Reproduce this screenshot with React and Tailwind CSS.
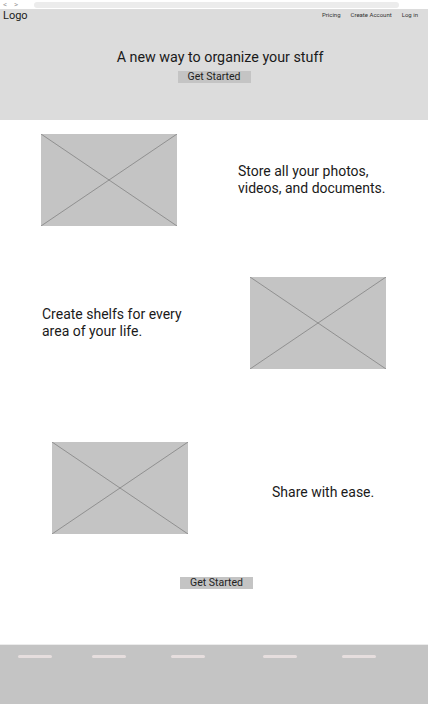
import React from "react";

const Placeholder = ({ className = "" }) => (
  <div className={`relative shrink-0 bg-[#c4c4c4] ${className}`}>
    <svg
      className="absolute inset-0 h-full w-full"
      viewBox="0 0 100 100"
      preserveAspectRatio="none"
    >
      <line x1="0" y1="0" x2="100" y2="100" stroke="#7a7a7a" strokeWidth="0.7" vectorEffect="non-scaling-stroke" />
      <line x1="100" y1="0" x2="0" y2="100" stroke="#7a7a7a" strokeWidth="0.7" vectorEffect="non-scaling-stroke" />
    </svg>
  </div>
);

const GetStarted = () => (
  <button
    type="button"
    className="flex h-[12px] w-[73px] items-center justify-center bg-[#c4c4c4] text-[10.5px] leading-none text-[#222]"
  >
    Get Started
  </button>
);

const navLinks = ["Pricing", "Create Account", "Log in"];
const footerDashes = ["ml-[18px]", "ml-[40px]", "ml-[45px]", "ml-[58px]", "ml-[45px]"];

export default function App() {
  return (
    <div className="flex h-[704px] w-[428px] flex-col overflow-hidden bg-white font-['Roboto',sans-serif] text-[#1a1a1a]">
      {/* browser chrome */}
      <div className="flex h-[9px] items-center bg-white">
        <span className="ml-[3px] text-[8px] leading-none text-[#999]">&lt;</span>
        <span className="ml-[7px] text-[8px] leading-none text-[#999]">&gt;</span>
        <div className="ml-[16px] h-[6px] w-[365px] rounded-full bg-[#ececec]" />
      </div>

      {/* header */}
      <header className="flex h-[111px] flex-col bg-[#dcdcdc]">
        <div className="flex items-start justify-between">
          <span className="ml-[3px] mt-[1px] text-[11px] leading-[12px]">Logo</span>
          <nav className="mr-[10px] mt-[3px] flex gap-[10px] text-[6px] leading-none text-[#333]">
            {navLinks.map((l) => (
              <span key={l}>{l}</span>
            ))}
          </nav>
        </div>
        <div className="mt-[27px] flex flex-col items-center">
          <h1 className="pl-[12px] text-[14.3px] leading-[17px]">A new way to organize your stuff</h1>
          <div className="mt-[5px]">
            <GetStarted />
          </div>
        </div>
      </header>

      {/* feature 1 */}
      <section className="mt-[14px] flex items-center">
        <Placeholder className="ml-[41px] h-[92px] w-[136px]" />
        <p className="ml-[61px] text-[14px] leading-[17px]">
          Store all your photos,
          <br />
          videos, and documents.
        </p>
      </section>

      {/* feature 2 */}
      <section className="mt-[51px] flex items-center">
        <p className="ml-[42px] w-[208px] text-[14px] leading-[17px]">
          Create shelfs for every
          <br />
          area of your life.
        </p>
        <Placeholder className="h-[92px] w-[136px]" />
      </section>

      {/* feature 3 */}
      <section className="mt-[73px] flex items-center">
        <Placeholder className="ml-[52px] h-[92px] w-[136px]" />
        <p className="ml-[84px] mt-[8px] text-[14px] leading-[17px]">Share with ease.</p>
      </section>

      <div className="mt-[43px] flex justify-center pl-[5px]">
        <GetStarted />
      </div>

      {/* footer */}
      <footer className="mt-auto h-[60px] border-t border-[#ececec] bg-[#c4c4c4]">
        <div className="mt-[10px] flex">
          {footerDashes.map((m, i) => (
            <div key={i} className={`h-[3px] w-[34px] rounded-full bg-[#e6dede] ${m}`} />
          ))}
        </div>
      </footer>
    </div>
  );
}
